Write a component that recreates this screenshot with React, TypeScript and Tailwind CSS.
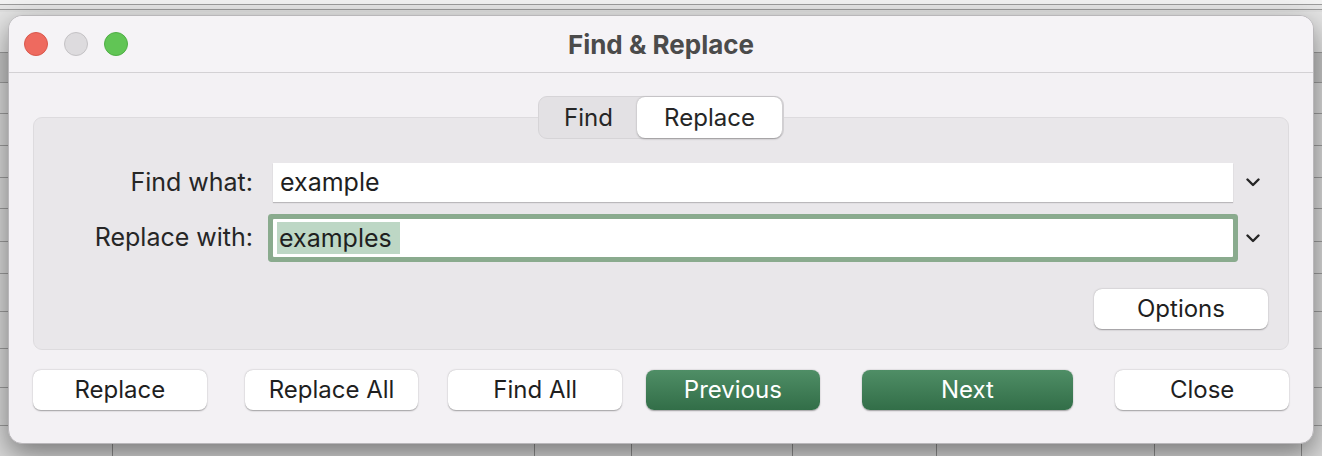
import React from "react";

const cols = [113, 422, 97, 161, 144, 218, 147, 40];
const rowHeights = [31, 32, 32, 31, 33, 32, 38, 37, 39, 38, 38, 40];

function Chevron() {
  return (
    <svg width="14" height="9" viewBox="0 0 14 9" className="shrink-0">
      <polyline points="1.5,1.5 7,7 12.5,1.5" fill="none" stroke="#262626" strokeWidth="2.4" strokeLinecap="round" strokeLinejoin="round" />
    </svg>
  );
}

function WhiteButton({ label, className = "" }: { label: string; className?: string }) {
  return (
    <button className={`h-[40px] w-[174px] rounded-[8px] bg-white text-[24px] text-[#1f1f1f] shadow-[0_0.5px_1.5px_rgba(0,0,0,0.35)] ${className}`}>
      {label}
    </button>
  );
}

function GreenButton({ label, className = "" }: { label: string; className?: string }) {
  return (
    <button className={`h-[40px] rounded-[8px] bg-gradient-to-b from-[#4f8e66] to-[#326e48] text-[24px] text-white shadow-[0_0.5px_1.5px_rgba(0,0,0,0.35)] ${className}`}>
      {label}
    </button>
  );
}

export default function App() {
  return (
    <div className="relative w-[1322px] h-[456px] overflow-hidden bg-[#d9d9d9]" style={{ fontFamily: "Inter, 'Noto Sans', sans-serif" }}>
      {/* spreadsheet behind the dialog */}
      <div className="flex flex-col">
        <div className="h-[12px] bg-[#f2f2f2] flex flex-col">
          <div className="h-[4px]" />
          <div className="h-px bg-[#9c9c9c]" />
          <div className="h-[4px] bg-[#e6e6e6]" />
          <div className="h-px bg-[#9c9c9c]" />
          <div className="flex-1 bg-[#dedede]" />
        </div>
        <div className="h-[40px] bg-[#e4e4e4]" />
        <div className="flex h-[31px] bg-[#c6c6c6] border-y border-[#9c9c9c]">
          {cols.map((w, i) => (
            <div key={i} style={{ width: w }} className="shrink-0 border-r border-[#a8a8a8] font-bold text-[22px] text-black leading-[29px] pl-[8px] overflow-hidden whitespace-nowrap">
              {i === 6 ? "Score" : ""}
            </div>
          ))}
        </div>
        {rowHeights.map((h, r) => (
          <div key={r} className="flex border-b border-[#9c9c9c]" style={{ height: h }}>
            {cols.map((w, i) => (
              <div key={i} style={{ width: w }} className="shrink-0 border-r border-[#8e8e8e]" />
            ))}
          </div>
        ))}
      </div>

      {/* dialog window */}
      <div className="absolute left-[8px] top-[15px] w-[1306px] h-[429px] rounded-[14px] bg-[#f3f1f4] border border-[#b9b7ba] shadow-[0_10px_28px_rgba(0,0,0,0.45)] flex flex-col overflow-hidden">
        <div className="relative h-[57px] shrink-0 bg-[#f5f3f6] border-b border-[#d3d1d4] flex items-center pl-[15px] gap-[16px]">
          <div className="w-[24px] h-[24px] rounded-full bg-[#ee6a5f] border border-[#d9574c]" />
          <div className="w-[24px] h-[24px] rounded-full bg-[#dddbde] border border-[#c4c2c5]" />
          <div className="w-[24px] h-[24px] rounded-full bg-[#61c555] border border-[#4fae45]" />
          <div className="absolute inset-0 flex items-center justify-center pointer-events-none">
            <span className="text-[26px] font-bold text-[#4b4b4b]">Find &amp; Replace</span>
          </div>
        </div>

        <div className="flex flex-col px-[24px] pt-[23px]">
          <div className="relative z-10 flex justify-center">
            <div className="flex h-[43px] items-center rounded-[9px] bg-[#e3e1e4] border border-[#d6d4d7] p-px">
              <div className="w-[97px] text-center text-[24px] text-[#262626]">Find</div>
              <div className="w-[145px] h-[41px] flex items-center justify-center rounded-[8px] bg-white shadow-[0_0.5px_2px_rgba(0,0,0,0.3)] text-[24px] text-[#262626]">
                Replace
              </div>
            </div>
          </div>

          <div className="-mt-[22px] h-[233px] rounded-[9px] bg-[#e9e7ea] border border-[#dddbde] flex flex-col pt-[45px] pr-[20px]">
            <div className="flex items-center h-[39px]">
              <div className="w-[219px] text-right text-[25px] text-[#262626]">Find what:</div>
              <div className="ml-[20px] w-[960px] h-[39px] bg-white shadow-[0_1px_1px_rgba(0,0,0,0.2)] flex items-center pl-[7px] text-[25px] text-[#1f1f1f]">
                example
              </div>
              <div className="ml-[13px]"><Chevron /></div>
            </div>

            <div className="flex items-center h-[38px] mt-[17px]">
              <div className="w-[219px] text-right text-[25px] text-[#262626]">Replace with:</div>
              <div className="ml-[20px] w-[960px] h-[38px] bg-white rounded-[1px] ring-[5px] ring-[#8aab8e] flex items-center pl-[4px] text-[25px] text-[#1f1f1f]">
                <span className="bg-[#bdd7c5] h-[32px] leading-[32px] pl-[2px] pr-[8px]">examples</span>
              </div>
              <div className="ml-[13px]"><Chevron /></div>
            </div>

            <div className="flex justify-end mt-[32px]">
              <WhiteButton label="Options" />
            </div>
          </div>

          <div className="flex mt-[20px]">
            <WhiteButton label="Replace" />
            <WhiteButton label="Replace All" className="ml-[38px]" />
            <WhiteButton label="Find All" className="ml-[30px]" />
            <GreenButton label="Previous" className="ml-[24px] w-[174px]" />
            <GreenButton label="Next" className="ml-[42px] w-[212px]" />
            <WhiteButton label="Close" className="ml-[42px]" />
          </div>
        </div>
      </div>
    </div>
  );
}
